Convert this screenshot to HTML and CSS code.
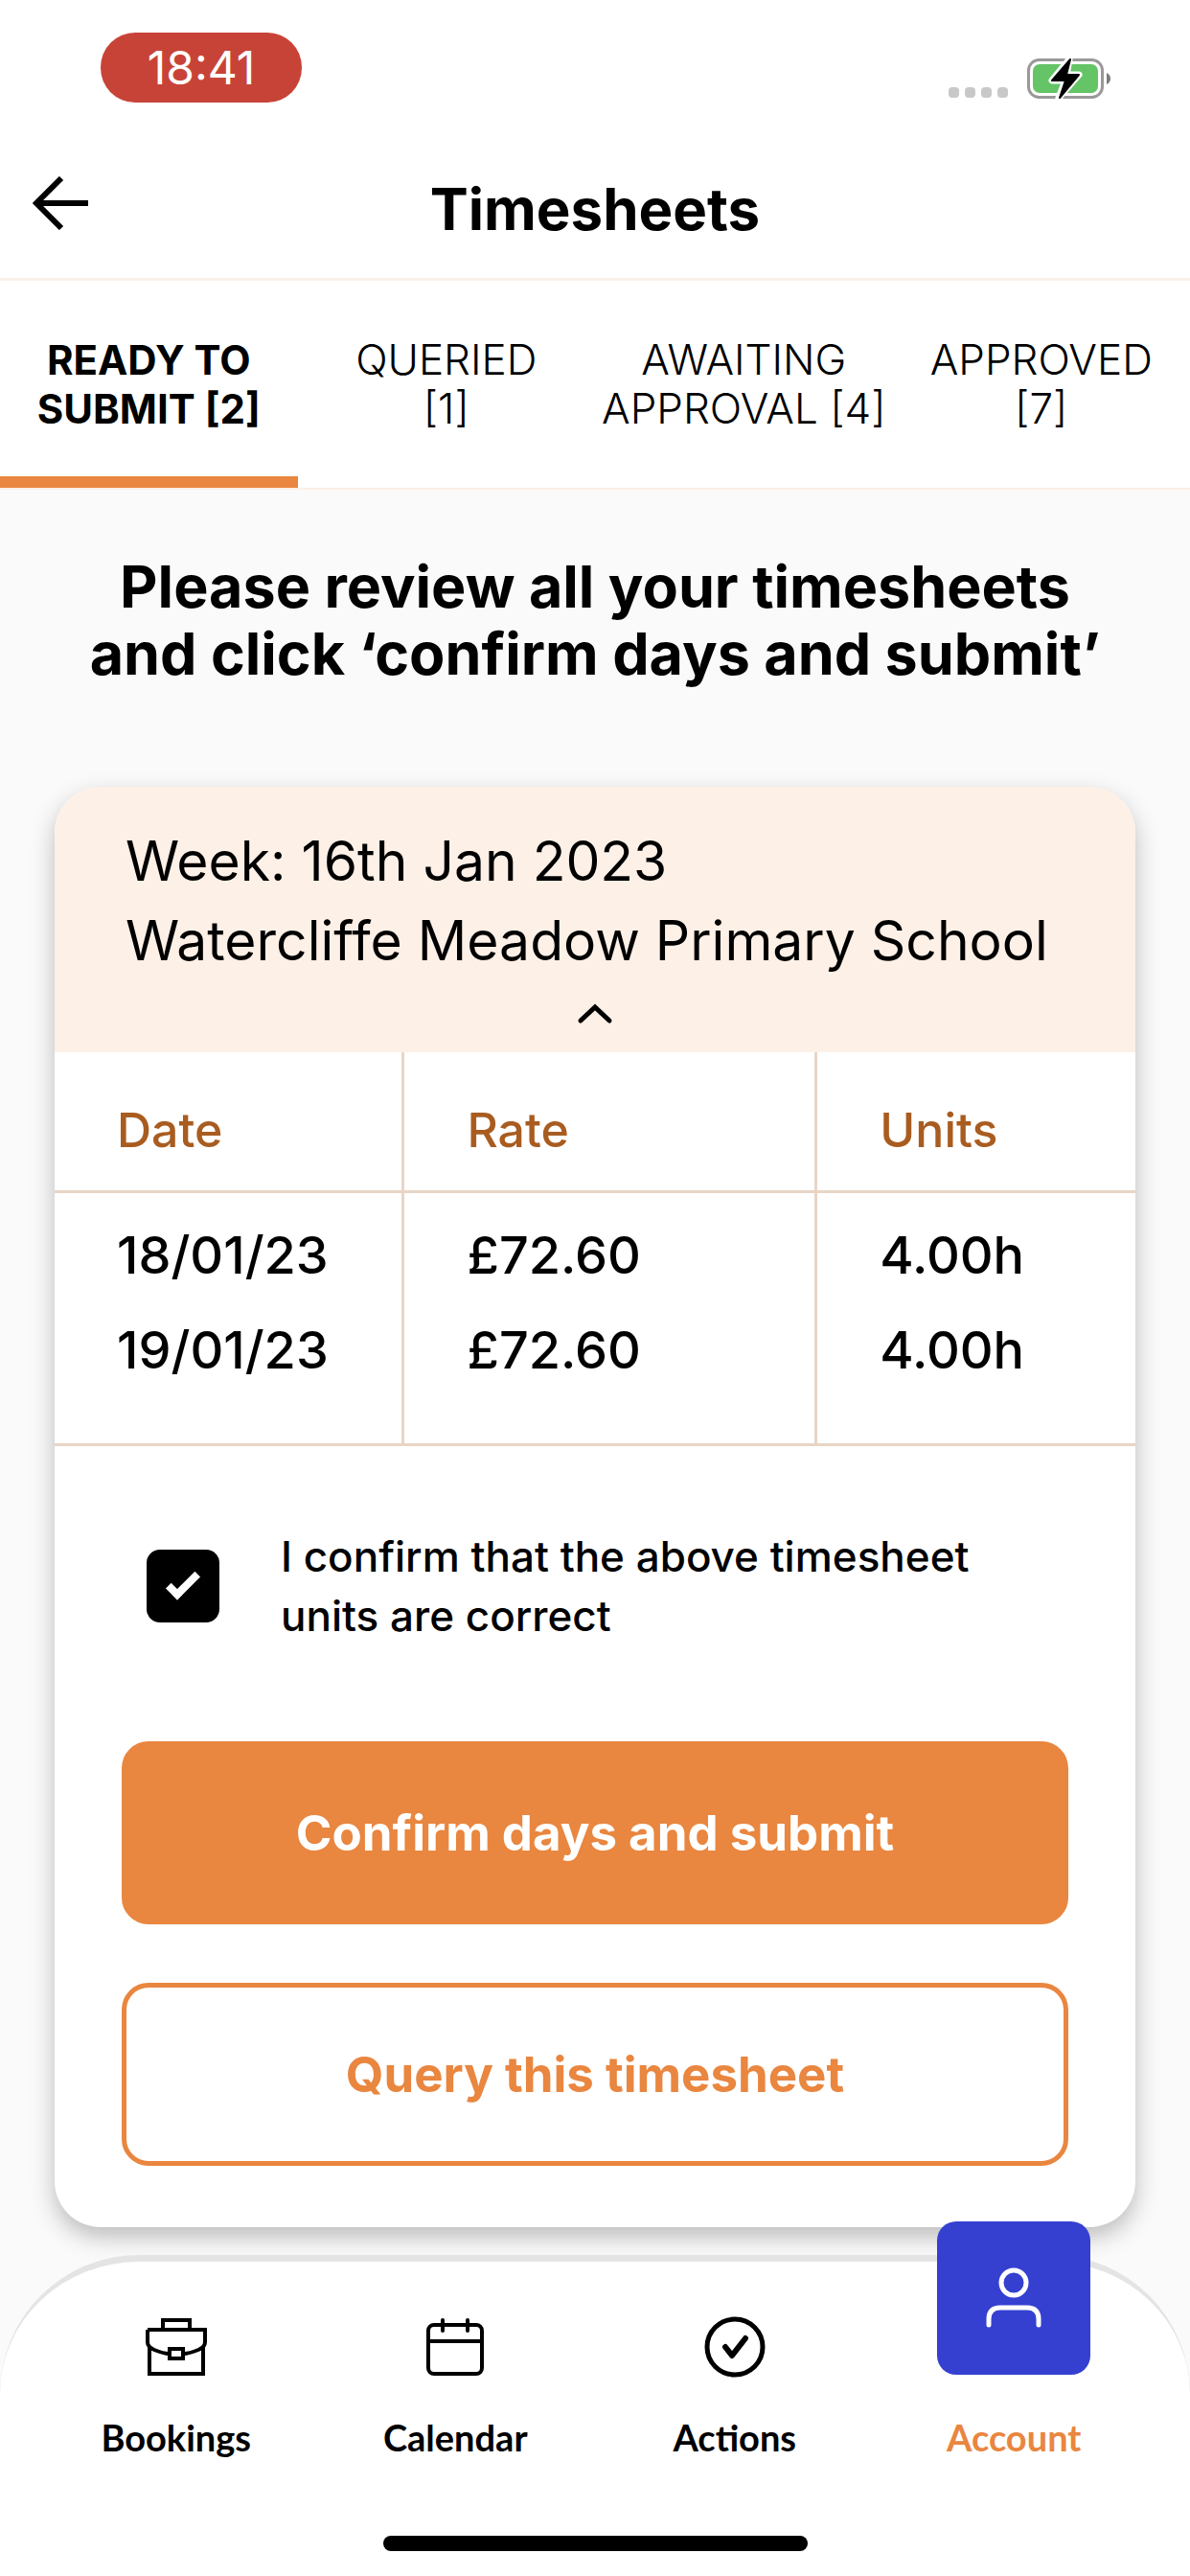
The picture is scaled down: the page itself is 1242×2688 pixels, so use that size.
FILE: index.html
```html
<!DOCTYPE html>
<html lang="en">

<head>
    <meta charset="UTF-8">
    <meta name="viewport" content="width=device-width, initial-scale=1">
    <title>Timesheets</title>
    <link rel="stylesheet" href="styles.css">
</head>

<body>
    <div class="status-bar">
        <span class="time">18:41</span>
        <div class="status-icons">
            <svg class="signal" width="62" height="11" viewBox="0 0 62 11" fill="#c8c8c8">
                <rect width="11" height="11" rx="4" />
                <rect x="17" width="11" height="11" rx="4" />
                <rect x="34" width="11" height="11" rx="4" />
                <rect x="51" width="11" height="11" rx="4" />
            </svg>
            <svg width="88" height="46" viewBox="0 0 88 46">
                <rect x="1.5" y="3.5" width="77" height="39" rx="11" fill="none" stroke="#9b9898" stroke-width="3" />
                <rect x="6" y="8" width="68" height="30" rx="7" fill="#65c466" />
                <path d="M83 17q4 2 4 6t-4 6z" fill="#7d7b7b" />
                <path d="M44 3 26 25h14l-7 18 21-24H41z" fill="#000" stroke="#fff" stroke-width="7" stroke-linejoin="round" />
                <path d="M45 3 26 25h14l-6 18 20-24H41z" fill="#000" stroke="#000" stroke-width="2" stroke-linejoin="round" />
            </svg>
        </div>
    </div>

    <header class="header">
        <button class="back" type="button" aria-label="Back">
            <svg width="60" height="56" viewBox="0 0 60 56" fill="none" stroke="#000" stroke-width="6">
                <path d="M30 2 4 28l26 26M4 28h54" />
            </svg>
        </button>
        <h1>Timesheets</h1>
    </header>

    <nav class="tabs">
        <a class="active" href="#ready">READY TO<br>SUBMIT [2]</a>
        <a href="#queried">QUERIED<br>[1]</a>
        <a href="#awaiting">AWAITING<br>APPROVAL [4]</a>
        <a href="#approved">APPROVED<br>[7]</a>
    </nav>

    <main>
        <h2>Please review all your timesheets<br>and click ‘confirm days and submit’</h2>

        <section class="card">
            <div class="card-header">
                <p>Week: 16th Jan 2023</p>
                <p>Watercliffe Meadow Primary School</p>
                <button class="toggle" type="button" aria-label="Collapse">
                    <svg width="38" height="22" viewBox="0 0 38 22" fill="none" stroke="#000" stroke-width="5" stroke-linecap="round">
                        <path d="M4 18 19 4l15 14" />
                    </svg>
                </button>
            </div>

            <table>
                <thead>
                    <tr>
                        <th>Date</th>
                        <th>Rate</th>
                        <th>Units</th>
                    </tr>
                </thead>
                <tbody>
                    <tr>
                        <td>18/01/23</td>
                        <td>£72.60</td>
                        <td>4.00h</td>
                    </tr>
                    <tr>
                        <td>19/01/23</td>
                        <td>£72.60</td>
                        <td>4.00h</td>
                    </tr>
                </tbody>
            </table>

            <form class="confirm">
                <div class="check">
                    <input type="checkbox" id="confirm" checked>
                    <label for="confirm">I confirm that the above timesheet<br>units are correct</label>
                </div>
                <button class="btn" type="submit">Confirm days and submit</button>
                <button class="btn outline" type="button">Query this timesheet</button>
            </form>
        </section>
    </main>

    <footer>
        <nav class="menu">
            <a href="#bookings">
                <svg width="66" height="66" viewBox="0 0 66 66" fill="none" stroke="#000" stroke-width="4">
                    <path d="M19 15V5h28v10M3 15h60v13q0 5-7 8-10 4-15 4M3 15v13q0 5 7 8 10 4 15 4M5 32v29h56V32" />
                    <rect x="26" y="35" width="14" height="10" />
                </svg>
                <span>Bookings</span>
            </a>
            <a href="#calendar">
                <svg width="66" height="66" viewBox="0 0 66 66" fill="none" stroke="#000" stroke-width="4" stroke-linecap="round">
                    <rect x="5" y="10" width="56" height="51" rx="6" />
                    <path d="M5 27h56M20 5v11M46 5v11" />
                </svg>
                <span>Calendar</span>
            </a>
            <a href="#actions">
                <svg width="66" height="66" viewBox="0 0 66 66" fill="none" stroke="#000" stroke-linecap="round" stroke-linejoin="round">
                    <circle cx="33" cy="33" r="29" stroke-width="5" />
                    <path d="m23 33 7 9 14-18" stroke-width="6" />
                </svg>
                <span>Actions</span>
            </a>
            <a class="current" href="#account">
                <svg class="tile" width="160" height="160" viewBox="0 0 160 160" fill="none" stroke="#fff" stroke-width="5" stroke-linecap="round">
                    <circle cx="80" cy="64" r="13" />
                    <path d="M54 108v-6q0-12 12-12h28q12 0 12 12v6" />
                </svg>
                <span>Account</span>
            </a>
        </nav>
        <div class="home-bar"></div>
    </footer>
</body>

</html>
```
FILE: styles.css
```css
* {
    box-sizing: border-box;
    margin: 0;
    padding: 0;
}

body {
    display: flex;
    flex-direction: column;
    min-height: 100vh;
    background-color: #fafafa;
    color: #000;
    font-family: Inter, "Liberation Sans", sans-serif;
}

button {
    border: 0;
    background: none;
    font: inherit;
    cursor: pointer;
}

a {
    color: inherit;
    text-decoration: none;
}

svg {
    display: block;
}

.status-bar {
    display: flex;
    justify-content: space-between;
    align-items: flex-start;
    height: 140px;
    padding: 34px 82px 0 105px;
    background-color: #fff;
}

.time {
    width: 210px;
    border-radius: 36px;
    background-color: #c84337;
    color: #fff;
    font-size: 48px;
    line-height: 73px;
    text-align: center;
}

.status-icons {
    display: flex;
    align-items: flex-end;
    gap: 20px;
    padding-top: 25px;
}

.signal {
    margin-bottom: 3px;
}

.header {
    display: grid;
    grid-template-columns: 60px 1fr 60px;
    align-items: center;
    height: 153px;
    padding: 0 34px;
    border-bottom: 3px solid #f9f0ea;
    background-color: #fff;
}

.back {
    padding-bottom: 6px;
}

.header h1 {
    padding-top: 6px;
    font-size: 60px;
    text-align: center;
}

.tabs {
    display: grid;
    grid-template-columns: repeat(4, 1fr);
    border-bottom: 2px solid #fcefe6;
    background-color: #fff;
    font-size: 44px;
    font-weight: 300;
    line-height: 51px;
    text-align: center;
}

.tabs a {
    padding: 57px 0 45px;
    border-bottom: 12px solid transparent;
    white-space: nowrap;
}

.tabs .active {
    border-color: #e9863f;
    font-size: 42px;
    font-weight: 700;
}

main {
    flex: 1;
    padding: 66px 57px 29px;
}

h2 {
    margin-bottom: 104px;
    font-size: 61px;
    line-height: 70px;
    text-align: center;
    white-space: nowrap;
}

.card {
    border-radius: 48px;
    background-color: #fff;
    box-shadow: 0 10px 24px rgba(0, 0, 0, 0.25);
}

.card-header {
    padding: 36px 74px 0;
    border-radius: 48px 48px 0 0;
    background-color: #fdf0e7;
    font-size: 57px;
    line-height: 83px;
}

.card-header p {
    white-space: nowrap;
}

.toggle {
    display: flex;
    justify-content: center;
    align-items: center;
    width: 100%;
    height: 75px;
    padding-bottom: 6px;
}

table {
    width: 100%;
    border-bottom: 3px solid #e8d5c6;
    border-spacing: 0;
    table-layout: fixed;
}

th,
td {
    padding-left: 65px;
    border-right: 3px solid #e8d5c6;
    text-align: left;
}

th:first-child {
    width: 32.4%;
}

th:nth-child(2) {
    width: 38.2%;
}

th:last-child,
td:last-child {
    border-right: 0;
}

th {
    padding-top: 51px;
    padding-bottom: 33px;
    border-bottom: 3px solid #e8d5c6;
    color: #a95c20;
    font-size: 50px;
    font-weight: 500;
    line-height: 60px;
}

td {
    font-size: 54px;
    font-weight: 500;
    line-height: 99px;
}

tbody tr:first-child td {
    padding-top: 15px;
}

tbody tr:last-child td {
    padding-bottom: 48px;
}

.confirm {
    padding: 84px 70px 64px;
}

.check {
    display: flex;
    align-items: center;
    gap: 64px;
    margin-bottom: 100px;
    padding-left: 26px;
    font-size: 44px;
    font-weight: 500;
    line-height: 62px;
}

.check input {
    display: grid;
    place-items: center;
    width: 76px;
    height: 76px;
    border-radius: 14px;
    background-color: #000;
    appearance: none;
}

.check input:checked::before {
    content: "";
    width: 26px;
    height: 9px;
    margin-bottom: 8px;
    border-bottom: 8px solid #fff;
    border-left: 8px solid #fff;
    transform: rotate(-45deg);
}

.btn {
    display: block;
    width: 100%;
    height: 191px;
    border: 5px solid #e9863f;
    border-radius: 28px;
    background-color: #e9863f;
    color: #fff;
    font-size: 51px;
    font-weight: 700;
}

.outline {
    margin-top: 61px;
    background-color: #fff;
    color: #e9863f;
}

footer {
    padding: 0 38px 26px;
    border-top: 7px solid #e4e4e4;
    border-radius: 145px 145px 0 0;
    background-color: #fff;
}

.menu {
    display: grid;
    grid-template-columns: repeat(4, 1fr);
    font-family: Lato, "Liberation Sans", sans-serif;
    font-size: 38px;
    font-weight: 700;
    line-height: 50px;
}

.menu a {
    display: flex;
    flex-direction: column;
    align-items: center;
    gap: 36px;
    padding-top: 56px;
}

.menu .current {
    gap: 40px;
    color: #e9863f;
}

.tile {
    margin-top: -98px;
    border-radius: 20px;
    background-color: #3540d0;
}

.home-bar {
    width: 443px;
    height: 16px;
    margin: 78px auto 0;
    border-radius: 8px;
    background-color: #000;
}
```
